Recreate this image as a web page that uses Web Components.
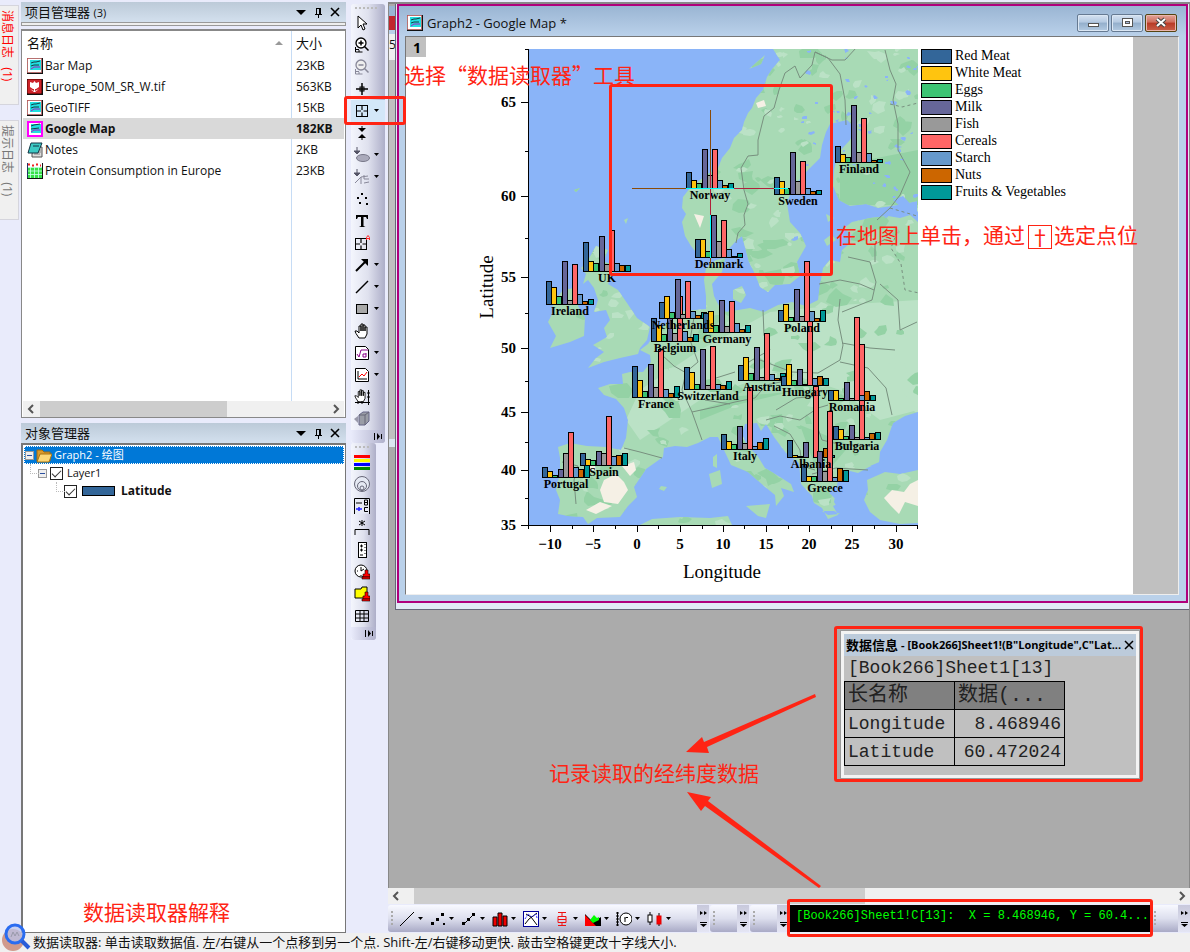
<!DOCTYPE html>
<html lang="zh-CN">
<head>
<meta charset="utf-8">
<title>Graph2 - Google Map</title>
<style>
html,body{margin:0;height:100%;overflow:hidden}
body{font-family:"Open Sans","Noto Sans CJK SC",sans-serif;font-size:13px;color:#111;background:#e9ebfb}
</style>
</head>
<body>
<app-shell></app-shell>
<script>
const base = `*{box-sizing:border-box}button{font:inherit;color:inherit;border:0;background:none;padding:0;margin:0;display:block}svg{display:block}`;
function define(tag, css, html) {
  const t = document.createElement('template');
  customElements.define(tag, class extends HTMLElement {
    constructor() {
      super();
      t.innerHTML = `<style>${base}${css}</style>${typeof html === 'function' ? html(this) : html}`;
      this.attachShadow({mode: 'open'}).append(t.content.cloneNode(true));
    }
  });
}

/* ---------- icons, all on a 16 x 16 grid ---------- */
const stamp = '<path d="M11 6h3v4h2v3H9v-3h2z" fill="#f00" stroke="#000" stroke-width=".6"/><path d="M8 13h8v2H8z" fill="#f00" stroke="#000" stroke-width=".6"/>';
const hand = '<path d="M5 15 2 10.500 1 8l2 0 2 2V3h2v5V1h2v7V2h2v6V4h2v7l-2 4z" fill="#fff" stroke="#000"/>';
const target = '<rect x="2.500" y="2.500" width="11" height="11" fill="none" stroke="#000"/><path d="M8 3v4M8 9.500V13M3 8h4M9.500 8H13" stroke="#000" stroke-width="1.200"/>';
const icons = {
  graph: '<rect width="16" height="16" fill="#111"/><rect x=".5" y=".5" width="14" height="14" fill="#fff" stroke="#c66" stroke-dasharray="2 1"/><rect x="3" y="2" width="11" height="10" fill="#20dfe0"/><path d="M4 5l3-1 2 0 4-1M4 8l3-1 5 0" stroke="#163c46" fill="none"/><path d="M4 11l3-2 6 0" stroke="#a020c0" fill="none"/>',
  graphOn: '<rect x="1" y="1" width="14" height="14" fill="#fff" stroke="#f0f" stroke-width="2"/><rect x="4" y="3" width="10" height="9" fill="#20dfe0"/><path d="M4 5l3-1 6-1M4 8l8-1" stroke="#163c46" fill="none"/><path d="M4 11l3-2 6 0" stroke="#a020c0" fill="none"/>',
  tulip: '<rect width="16" height="16" fill="#111"/><rect x=".5" y=".5" width="14" height="14" rx="1" fill="#cc2229" stroke="#811"/><path d="M3 3l3 1 1.500-2L9 4l3-1v5L9 10H6L3 8z" fill="#fff"/><path d="M7 9h1v4H7zM3 10l4 2v1zM12 10l-4 2v1z" fill="#fff"/>',
  notes: '<path d="M7 5h8v10H5v-3z" fill="#ddd" stroke="#555"/><path d="M8 8h6M8 10h6M7 12h6" stroke="#888"/><path d="M4 1h11l-4 10H1z" fill="#3cc9c4" stroke="#134"/><path d="M6 4h6" stroke="#134"/>',
  sheet: '<rect width="16" height="16" fill="#111"/><rect width="15" height="15" fill="#fff"/><path d="M1 1.500h2M5 2.500h2M9 1.500h2M13 2.500h1" stroke="#e22" stroke-width="2"/><path d="M0 4h15v11H0z" fill="#36e046"/><path d="M0 4.500h15M0 8h15M0 11.500h15M3.500 4v11M7.500 4v11M11.500 4v11" stroke="#cfe" stroke-width=".8"/><path d="M.5 0v15" stroke="#236"/>',
  folder: '<path d="M1 3h5l2 2h6v9H1z" fill="#d99a2b" stroke="#a06a10"/><path d="M4 7h12l-3 8H1z" fill="#fbd777" stroke="#a87212"/>',
  pointer: '<path d="M4 1v12l3-3 2 5 2-1-2-5h4z" fill="#fff" stroke="#000"/>',
  zoomIn: '<circle cx="7" cy="6" r="5" fill="#fff" stroke="#000" stroke-width="1.300"/><path d="M4.500 6h5M7 3.500v5M10.500 9.500l4 4" stroke="#000" stroke-width="1.500"/><path d="M1.500 10v5h7M2 12.500h3M5 15v-2" stroke="#000" fill="none"/>',
  zoomOut: '<circle cx="7" cy="6" r="5" fill="#eee" stroke="#889" stroke-width="1.300"/><path d="M4.500 6h5M10.500 9.500l4 4" stroke="#889" stroke-width="1.500"/><path d="M1.500 10v5h7M2 12.500h3M5 15v-2" stroke="#889" fill="none"/>',
  cross: '<path d="M8 2v12M2 8h12" stroke="#000" stroke-width="1.500"/><rect x="6" y="6" width="4" height="4" fill="none" stroke="#000"/>',
  target,
  squeeze: '<path d="M8 1v5M8 10v5" stroke="#000"/><path d="M4 3h8L8 7zM4 13h8L8 9z"/>',
  maskRegion: '<ellipse cx="9" cy="11" rx="6.500" ry="3.500" fill="#aab" stroke="#778"/><path d="M3 0v6M0 4h6L3 7z" stroke="#556" fill="#556"/>',
  maskCurve: '<path d="M3 0v6M0 4h6L3 7z" stroke="#556" fill="#556"/><path d="M1 14l6-6 7-1M7 8v7M10 6v4h5M10 14l5-1" stroke="#889" fill="none"/>',
  dots: '<path d="M7 2h2v2H7zM3 6h2v2H3zM11 6h2v2h-2zM5 11h2v2H5zM12 12h2v2h-2z"/>',
  text: '<path d="M2 2h12v4h-1l-1-2H9.500v9l2 1H5l2-1V4H4L3 6H2z"/>',
  targetA: '<g transform="translate(-1 1)">' + target + '</g><path d="M12.500 5V2.500L14 .5l1.500 2V5M12.500 3.500h3" stroke="#f22" fill="none"/>',
  arrow: '<path d="M2 14L12 4" stroke="#000" stroke-width="2"/><path d="M7 2h7v7z"/>',
  line: '<path d="M2 14L14 2" stroke="#000" stroke-width="1.500"/>',
  rect: '<rect x="2.500" y="3.500" width="11" height="9" fill="#a8a8a8" stroke="#000"/>',
  hand,
  formula: '<path d="M1.500 1.500h10l3 3v10h-13z" fill="#fff" stroke="#000"/><path d="M3 9l2 3 2-7h7" stroke="#808" fill="none"/><path d="M12 8v4H9V9h3" stroke="#808" fill="none"/>',
  plot: '<path d="M1.500 1.500h10l3 3v10h-13z" fill="#fff" stroke="#000"/><path d="M4 4v8h9" stroke="#000" fill="none"/><path d="M5 10l3-3 2 2 3-4" stroke="#f00" fill="none"/>',
  handAxis: '<g transform="scale(.85)">' + hand + '</g><path d="M1 13.500h15M14.500 1v15M13 4h3M13 8h3M4 12v3M8 12v3" stroke="#000"/>',
  cube: '<path d="M5 4l4-3h6v9l-4 4H5z" fill="#9a9da6" stroke="#668"/><path d="M5 4h6l4-3M11 4v10" stroke="#667" fill="none"/><path d="M0 8l4-3v7z" fill="#99a"/>',
  bands: '<path d="M0 1h16v3H0z" fill="#f00"/><path d="M0 5h16v3H0z" fill="#ff0"/><path d="M0 9h16v3H0z" fill="#00f"/><path d="M0 13h16v3H0z" fill="#080"/>',
  rings: '<g fill="none" stroke="#667"><circle cx="8" cy="8" r="7.500" fill="#e5e9f3"/><circle cx="8" cy="10" r="4.500"/><circle cx="8" cy="12" r="2"/></g>',
  legendBC: '<rect x=".5" y=".5" width="15" height="15" fill="#e8ebf5"/><path d="M.5 16V.5h15V16M2 5h6" stroke="#000" fill="none"/><path d="M2 11h6M5 9v4" stroke="#22f" stroke-width="1.500"/><path d="M10.500 2v5h3V2h-3M10.500 4.500h3M14 9.500h-3.500v4H14" stroke="#000" fill="none"/>',
  bracket: '<path d="M1 15V9.500h14V15M8 0v6M5 1l6 4M11 1L5 5" stroke="#000" fill="none"/>',
  scale: '<rect x="4.500" y=".5" width="8" height="15" fill="#fff" stroke="#000"/><path d="M6 4h3M7.500 2.500v3M6 8h3M7.500 6.500v3M6 13h3M11 2v1M11 5v1M11 8v1M11 11v1" stroke="#000"/>',
  clock: '<circle cx="7" cy="7" r="6" fill="#fff" stroke="#000"/><path d="M7 3v4l3-2M3 7h1M7 11v1" stroke="#000" fill="none"/>' + stamp,
  stampFolder: '<path d="M1 3h6l1-2h5v11H1z" fill="#ff0" stroke="#000"/>' + stamp,
  grid: '<path d="M1.500 2.500h13v11h-13zM1 6h13M1 10h13M6 2v11M10 2v11" stroke="#000" fill="none"/>',
  thinLine: '<path d="M1 15L15 1" stroke="#000"/>',
  scatter: '<path d="M1 11h3v3H1zM6 7h3v3H6zM11 2h3v3h-3zM13 12h2v2h-2z"/>',
  lineDots: '<path d="M2 14L14 2" stroke="#000"/><path d="M1 11h3v3H1zM6 7h3v3H6zM11 2h3v3h-3z"/>',
  columns: '<path d="M1 6h4v9H1zM6 2h4v13H6zM11 5h4v10h-4z" fill="#e00" stroke="#000"/>',
  multi: '<rect x=".5" y=".5" width="15" height="15" fill="#fff" stroke="#009"/><path d="M2 13l4-5 8-6M3 3l5 3 6 8" stroke="#000" fill="none"/><path d="M2 8l3-5 4 3 4-3 1 4" stroke="#33f" fill="none" stroke-dasharray="2 1"/>',
  box: '<path d="M8 1v4M4 1.500h8M4 5.500h8v6H4zM4 8.500h8M8 11v4M4 14.500h8" stroke="#e11" fill="none"/>',
  area: '<path d="M0 3l8 8 8-5v9H0z" fill="#000"/><path d="M0 4l11 11H0z" fill="#f00"/><path d="M5 9l4-5 3 3 2-1v3l-6 3z" fill="#0f0"/>',
  polar: '<path d="M1.500 1v14M0 2h3M0 5h3M0 8h3M0 11h3M0 14h3" stroke="#000"/><circle cx="10" cy="8" r="6" fill="#fff" stroke="#000"/><path d="M9 11V6M9 7.500l1-1h2" stroke="#000" fill="none"/>',
  candle: '<path d="M3 1v13M12 2v13" stroke="#000"/><rect x="1" y="4" width="4" height="7" fill="#fff" stroke="#000"/><rect x="10" y="5" width="4" height="8" fill="#f00" stroke="#d00"/>'
};
const icon = n => `<svg width="16" height="16" viewBox="0 0 16 16" aria-hidden="true">${icons[n]}</svg>`;

/* ---------- vertical log tab ---------- */
define('log-tab', `
:host{display:block;height:100px;background:#f0f0f0;border:1px solid #d5d5dd;border-left:0;width:19px;padding:4px 0 0 0;color:#777;font-size:12px}
:host([alert]){color:#f00}
span{writing-mode:vertical-rl;text-orientation:sideways;line-height:15px;white-space:pre}`,
`<span><slot></slot></span>`);

/* ---------- docked panel with its caption ---------- */
define('dock-panel', `
:host{display:flex;flex-direction:column;min-height:0}
header{display:flex;align-items:center;height:20px;padding:0 2px 0 4px;background:linear-gradient(#bccad8,#d3e0ee);flex:none;line-height:20px}
h2{font-size:13px;font-weight:400;margin:0;flex:1}small{font-size:11px}
button{width:17px;height:16px}`,
el => `<header><h2>${el.getAttribute('caption')} <small>${el.getAttribute('count') || ''}</small></h2>
<button aria-label="菜单"><svg width="17" height="16"><path d="M3 6h10L8 11z"/></svg></button>
<button aria-label="固定"><svg width="17" height="16"><path d="M6.500 4v6M10.500 4v6M6 4.500h5M5 10.500h7M8.500 11v3M9.500 4v6" stroke="#000" fill="none"/></svg></button>
<button aria-label="关闭"><svg width="17" height="16"><path d="M4 4l8 8M12 4l-8 8" stroke="#000" stroke-width="1.600"/></svg></button></header><slot></slot>`);

/* ---------- horizontal scroll bar ---------- */
define('h-scroll', `
:host{display:flex;height:16px;background:#f0f0f0;flex:none;align-items:center}
button{width:17px;height:16px}
.track{flex:1;height:100%;display:flex;padding:0 8px 0 var(--lead,0)}.thumb{background:#cdcdcd;width:var(--thumb,60%)}`,
`<button aria-label="左"><svg width="17" height="16"><path d="M10 4L6 8l4 4" stroke="#555" stroke-width="2" fill="none"/></svg></button>
<div class="track"><div class="thumb"></div></div>
<button aria-label="右"><svg width="17" height="16"><path d="M7 4l4 4-4 4" stroke="#555" stroke-width="2" fill="none"/></svg></button>`);

/* ---------- project file list ---------- */
const files = [['graph','Bar Map','23KB'],['tulip','Europe_50M_SR_W.tif','563KB'],['graph','GeoTIFF','15KB'],['graphOn','Google Map','182KB'],['notes','Notes','2KB'],['sheet','Protein Consumption in Europe','23KB']];
define('file-list', `
:host{display:flex;flex-direction:column;background:#fff;border:1px solid #888;border-width:2px 1px 1px 1px;flex:1;min-height:0;padding:0 1px}
.body{flex:1;background:linear-gradient(90deg,transparent calc(100% - 53px),#c6dcf5 calc(100% - 53px),#c6dcf5 calc(100% - 52px),transparent calc(100% - 52px));min-height:0}
table{border-collapse:collapse;width:100%;table-layout:fixed;font-size:12px;line-height:20px}
th{font-weight:400;font-size:13px;text-align:left;height:24px;padding:0 4px}
th:first-child{position:relative}th svg{position:absolute;right:8px;top:10px}
th:last-child,td:last-child{width:53px;padding:0 0 0 5px}
td{height:21px;padding:0 0 0 4px;overflow:visible;white-space:nowrap}
td div{display:flex;gap:2px;align-items:center}
.on td{background:#d9d9d9;font-weight:700}`,
`<div class="body"><table><thead><tr><th>名称<svg width="8" height="5"><path d="M4 0l4 4H0z" fill="#999"/></svg></th><th>大小</th></tr></thead><tbody>
${files.map(f => `<tr${f[0] === 'graphOn' ? ' class="on"' : ''}><td><div>${icon(f[0])}<span>${f[1]}</span></div></td><td>${f[2]}</td></tr>`).join('')}
</tbody></table></div><h-scroll style="--thumb:67%"></h-scroll>`);

/* ---------- object tree ---------- */
define('object-tree', `
:host{display:block;background:#fff;border:2px solid #777;border-right-width:1px;border-bottom-width:1px;flex:1;font-size:11px;line-height:18px;padding:1px}
.row{display:flex;align-items:center;height:18px;gap:3px;padding-left:1px}
.root{background:#0078d7;color:#fff;outline:1px dotted #fff;outline-offset:-1px;gap:2px}
.l1{padding-left:14px}.l2{padding-left:40px}
.l1::before,.l2::before{content:"";position:absolute;width:8px;height:9px;margin:-9px 0 0 -8px;border:1px dotted #bbb;border-width:0 0 1px 1px}
.box{width:9px;height:9px;border:1px solid #999;background:linear-gradient(#2c50a0,#2c50a0) center/5px 1px no-repeat #eee}
input{appearance:none;width:13px;height:13px;margin:0 1px 0 0;border:1px solid #222;background:#fff;display:grid;place-items:center}
input:checked::before{content:"";width:8px;height:4px;border:solid #333;border-width:0 0 1px 1px;transform:rotate(-45deg);margin-bottom:2px}
.swatch{width:33px;height:10px;background:#336699;border:1px solid #000;margin:0 3px 0 1px}
label{display:flex;align-items:center;gap:3px}b{font-size:12px}`,
`<div class="row root"><i class="box"></i>${icon('folder')}<span>Graph2 - 绘图</span></div>
<div class="row l1"><i class="box"></i><label><input type="checkbox" checked>Layer1</label></div>
<div class="row l2"><label><input type="checkbox" checked><i class="swatch"></i><b>Latitude</b></label></div>`);

/* ---------- vertical tool strip ---------- */
const caret = '<svg class="caret" width="6" height="4"><path d="M0 0h5L2.500 3z"/></svg>';
define('tool-strip', `
:host{display:flex;flex-direction:column;border-radius:3px;background:linear-gradient(90deg,#f4f6fd,#dfe1ee 50%,#adaec8);width:var(--w,34px)}
.grip{height:8px;padding:3px 0 0 4px}.grip i{display:block;width:24px;height:2px;background:repeating-linear-gradient(90deg,#bbb 0 2px,transparent 2px 4px)}
:host([short]) .grip i{width:16px}
button{display:flex;align-items:center;height:22px;width:100%;padding-left:3px}
button.on{background:#d3e7f8}
.caret{margin-left:4px}
.more{height:13px;background:linear-gradient(90deg,#e9ebfb,#b0b1cc);border-radius:0 0 4px 4px;display:flex;justify-content:flex-end;padding:3px 3px 0 0}`,
el => `<div class="grip"><i></i></div>${el.getAttribute('tools').split(' ').map(n => {
  const drop = n.endsWith('+'), k = n.replace('+', '');
  return `<button aria-label="${k}"${k === 'target' ? ' class="on"' : ''}>${icon(k)}${drop ? caret : ''}</button>`;
}).join('')}<div class="more"><svg width="8" height="8"><path d="M.5 0v7" stroke="#000"/><path d="M3 0l3 3.500L3 7z"/><path d="M7.500 1v5" stroke="#000"/></svg></div>`);

/* ---------- horizontal tool bar ---------- */
define('tool-row', `
:host{display:flex;height:27px;border-radius:3px;background:linear-gradient(#f8f9ff,#dddfee 50%,#a9aac6);align-items:center;flex:none}
.grip{width:2px;height:15px;margin:0 6px 0 3px;background:repeating-linear-gradient(#aaa 0 2px,transparent 2px 4px);flex:none}
button{display:flex;align-items:center;gap:3px;width:31px;height:24px;flex:none}
.more{margin-left:auto;width:12px;height:100%;background:linear-gradient(#c8c9dc,#e4e5f4);padding:5px 2px 0 3px}`,
el => `<span class="grip"></span>${(el.getAttribute('tools') || '').split(' ').filter(Boolean).map(n => `<button aria-label="${n}">${icon(n)}${caret}</button>`).join('')}
<div class="more"><svg width="7" height="18"><path d="M0 1l3 2-3 2zM4 1l3 2-3 2zM0 14h7l-3.500 3zM0 12h7v1H0z"/></svg></div>`);

/* ---------- the map graph ---------- */
const colours = ['#336699','#ffc40f','#3cc473','#666699','#999999','#ff6666','#6699cc','#cc6600','#009999'];
const foods = ['Red Meat','White Meat','Eggs','Milk','Fish','Cereals','Starch','Nuts','Fruits &amp; Vegetables'];
const countries = [
 ['Portugal',542,477,[10,6,2,8,24,45,10,8,12]],['Spain',580,465,[12,6,5,14,12,49,9,10,12]],
 ['Finland',835,162,[16,8,5,57,10,44,9,2,3]],['Sweden',774,194,[17,13,6,42,13,33,6,3,4]],
 ['Norway',686,188,[16,8,5,39,13,39,8,3,5]],['Denmark',695,257,[18,18,6,42,16,37,8,1,4]],
 ['UK',583,271,[29,10,8,35,7,41,8,6,6]],['Ireland',546,304,[23,17,8,43,4,40,10,3,5]],
 ['Belgium',651,341,[23,16,7,28,8,45,10,4,7]],['Netherlands',659,318,[16,22,6,39,4,37,7,3,6]],
 ['Germany',703,332,[19,21,7,32,6,31,9,3,7]],['Albania',787,457,[17,2,1,15,0,71,1,9,2]],
 ['Greece',801,481,[17,5,5,30,10,70,4,13,11]],
 ['France',632,397,[31,17,6,33,10,48,8,4,11]],['Switzerland',684,389,[22,17,5,40,4,43,5,4,8]],
 ['Italy',721,449,[15,8,5,23,6,62,3,7,11]],
 ['Austria',738,380,[15,23,7,33,3,47,6,2,7]],['Hungary',781,385,[9,21,5,16,1,67,7,9,7]],
 ['Poland',778,321,[11,17,4,32,5,60,10,3,11]],['Bulgaria',833,439,[13,10,3,14,2,95,2,6,7]],
 ['Romania',828,400,[10,10,2,18,2,83,5,9,5]]];
const land = `
M773 49L780 60 773 68 767 77 763 90 756 98 752 108 748 113 744 122 742 130 734 138 730 148 722 158 718 168 708 174 700 180 690 188 683 197 682 208 686 214 682 222 685 236 691 246 699 256 716 258 728 250 735 242 742 236 745 247 749 262 755 274 760 287 768 292 775 285 790 284 800 276 797 262 806 246 800 233 790 222 787 203 793 187 806 172 820 158 822 145 826 132 830 124 847 120 856 128 850 140 838 153 834 170 833 186 839 200 850 206 866 204 878 208 892 206 908 203 917 201 917 213 900 218 888 216 870 218 852 222 844 228 852 236 848 245 842 250 840 262 830 260 823 268 820 285 818 300 806 306 792 302 778 305 764 312 750 308 738 310 726 312 719 306 714 296 712 284 722 272 725 258 716 260 706 268 704 280 706 296 706 309 695 310 684 311 672 315 665 325 656 332 648 344 640 350 650 355 651 362 643 372 630 372 622 374 623 384 610 384 598 388 604 395 616 399 624 408 628 420 626 438 621 450 606 447 587 446 570 443 558 447 560 458 560 473 556 490 560 500 558 514 568 516 583 517 588 524 597 518 620 517 628 506 637 497 634 487 646 469 663 457 664 448 675 446 687 447 698 443 710 437 718 437 724 450 731 465 748 472 764 486 775 495 776 506 784 496 781 488 794 492 791 484 780 477 765 468 757 455 747 446 742 434 745 424 757 423 761 431 766 424 774 437 786 453 799 463 801 484 812 496 814 503 822 508 828 519 838 515 833 506 840 503 829 493 834 486 846 488 841 478 846 470 858 473 869 467 879 464 880 452 887 440 893 423 905 416 918 412 918 49z
M867 480L885 472 900 474 918 470 918 523 900 524 880 520 870 512 864 500 868 490z
M587 262L596 246 608 250 603 262 612 264 614 272 608 284 618 290 627 303 637 318 650 327 647 340 640 348 638 354 620 358 604 362 588 368 596 358 604 352 593 345 607 337 604 328 610 320 606 310 594 312 598 300 594 288 588 280 583 284 586 274 581 268z
M563 290L574 288 580 296 578 306 585 318 584 336 570 342 550 348 556 336 548 322 554 310 552 304z
M746 506L770 504 766 518 758 516z M709 474L720 470 722 484 712 488z M713 457L717 454 717 468 713 466z
M640 525L652 519 680 517 710 518 728 516 732 525z M661 486l6 1-3 4-5-2z M574 190l6-2-4 4z M624 220l4-2-2 6z
M733 290l9-4 4 9-5 8-8-4z M822 511h12l6 3-12 1z M749 69l16-14-4 9z M826 214l8 4-6 4z M824 240l8-6 4 6-9 6z`;
const borders = `
M785 73L779 90 774 108 764 116 758 140 758 155 748 156 741 168 744 190 748 204 744 215 745 225 738 233 736 243
M785 73L795 66 800 78 812 65 815 52 828 58 840 74 845 100 846 125M815 52L832 60 845 60 856 48M885 50L890 70 896 84 893 100 898 124 898 150 910 172 900 195 890 208 877 220
M848 257L870 262 876 282 872 300 842 312M819 284L840 280 860 284 874 290M840 299L838 320 843 345 840 360 818 373 792 372 760 360M763 310L764 335 770 350 752 360 740 368M875 262V244L884 240M880 284L898 300 900 330 917 322M842 343L870 348 895 350M840 362L868 368 886 388 892 415
M695 312L690 340 698 362 686 372 682 390 692 412 702 440M662 355L674 366 688 374M624 448L640 452 662 458M562 462L578 466 574 480 576 504M692 412L715 407 735 402 755 398M755 398L766 385 790 380M766 420L780 416 800 420 818 408 828 405M774 426L790 434 800 450 802 466 815 470M815 420L822 440 838 444 870 446M812 474L836 468 868 470M705 400L730 404M735 372L716 378M776 410L796 398 818 396`;
function rng(seed) { return () => (seed = (seed * 16807) % 2147483647) / 2147483647; }
function patches() {
  const r = rng(4711), n = v => Math.round(v);
  let dark = '', pale = '', water = '';
  const blob = (x, y, s) => {
    let d = '';
    const k = 7;
    for (let i = 0; i < k; i++) {
      const a = i / k * 6.283, q = s * (0.4 + r());
      d += (i ? 'L' : 'M') + n(x + Math.cos(a) * q * 1.1) + ' ' + n(y + Math.sin(a) * q * 0.8);
    }
    return d + 'z';
  };
  for (let i = 0; i < 230; i++) dark += blob(540 + r() * 378, 49 + r() * 476, 3 + r() * 7);
  for (let i = 0; i < 260; i++) pale += blob(540 + r() * 378, 49 + r() * 476, 2 + r() * 5);
  for (let i = 0; i < 60; i++) water += blob(790 + r() * 128, 49 + r() * 190, 1 + r() * 2);
  return `<path d="${dark}" fill="#94d2a5"/><path d="${pale}" fill="#bbe2c6"/><path d="${water}" fill="#8ab4f8"/>`;
}
function bars([name, x, y, h]) {
  return h.map((v, i) => `<rect x="${x + Math.round(i * 5.2) + .5}" y="${y - v + .5}" width="5" height="${v}" fill="${colours[i]}"/>`).join('');
}
const yt = [[65,102],[60,196],[55,277],[50,348],[45,412],[40,470],[35,525]];
const xt = [['−10',550],['−5',593],['0',637],['5',680],['10',723],['15',766],['20',809],['25',852],['30',896]];
define('map-graph', `:host{display:block;flex:none;background:#fff}svg{font-family:"Liberation Serif",serif}`,
`<svg width="727" height="557" viewBox="406 37 727 557" role="img" aria-label="Google Map">
<defs><clipPath id="frame"><rect x="528" y="49" width="390" height="476"/></clipPath><clipPath id="land"><path d="${land}"/></clipPath></defs>
<rect x="528" y="49" width="390" height="476" fill="#8ab4f8"/>
<g clip-path="url(#frame)"><path d="${land}" fill="#a8dab5"/>
<g clip-path="url(#land)">
<path d="M770 312L840 305 918 300V410L880 420 840 390 780 370 700 400 640 440 626 420 640 390 700 350z" fill="#bbe2c6"/>
<path d="M700 410L740 396 790 392 740 404 700 420zM840 165L918 150V205L840 205zM800 425L850 445 820 480z" fill="#94d2a5"/>
${patches()}
<path d="M604 480l12-6 8 8 4 8-10 14-14-2-4-12zM622 466l12-4 2 8-6 6zM586 510l14-8 12 4-16 8zM584 466l10-4 2 8-10 2zM884 498l8-8 12 2 6-8 8-4v26l-13-4-6 12-8-8zM694 214l10 2-4 12zM756 103l8-3 2 6-8 2z" fill="#f5f0e5"/></g>
<path d="M870 466l14-6 16 8-14 4zM838 480l18 2 8 30-18 10-12-20zM893 200l10-4 15 16v10z" fill="#8ab4f8"/>
<path d="${borders}" fill="none" stroke="#78907f"/>
<path d="M890 104l12 3 16-4M890 208l27 8M897 232l-6 16 10 16 4 26 14 3" fill="none" stroke="#78907f" stroke-dasharray="3 3"/></g>
<g stroke="#000" shape-rendering="crispEdges">
<path fill="none" d="M528.500 49V525.500H918${yt.map(t => `M521 ${t[1]}.5h7`).join('')}${[49,151,238,313,381,442,498].map(v => `M525 ${v}.5h3`).join('')}${xt.map(t => `M${t[1]}.5 525v7`).join('')}${[528,572,615,658,702,744,788,831,874,917].map(v => `M${v}.5 525v4`).join('')}"/>
${countries.map(bars).join('')}</g>
<g font-size="12" font-weight="700" text-anchor="middle">${countries.map(c => `<text x="${c[1] + 24}" y="${c[2] + 11}">${c[0]}</text>`).join('')}</g>
<g fill="#8a4b08"><rect x="710" y="110" width="1" height="62"/><rect x="632" y="188" width="54" height="1"/><rect x="710" y="258" width="1" height="6"/></g>
<g fill="#b0203a"><rect x="710" y="172" width="1" height="43"/><rect x="734" y="188" width="40" height="1"/></g>
<g fill="#00ffff"><rect x="686" y="188" width="48" height="1"/><rect x="710" y="215" width="1" height="43"/><rect x="774" y="188" width="14" height="1"/></g>
<g font-size="15" font-weight="700">${yt.map(t => `<text x="516" y="${t[1] + 5}" text-anchor="end">${t[0]}</text>`).join('')}${xt.map(t => `<text x="${t[1]}" y="549" text-anchor="middle">${t[0]}</text>`).join('')}</g>
<g font-size="19" text-anchor="middle"><text x="722" y="578">Longitude</text><text transform="translate(493 287) rotate(-90)">Latitude</text></g>
<g font-size="14">${foods.map((f, i) => `<rect x="921.500" y="${49.5 + i * 17}" width="30" height="14" fill="${colours[i]}" stroke="#000" shape-rendering="crispEdges"/><text x="955" y="${60 + i * 17}">${f}</text>`).join('')}</g>
<rect x="406" y="37" width="20" height="20" fill="#c0c0c0"/><text x="417" y="53" font-size="14" font-weight="700" text-anchor="middle" style="font-family:'Open Sans'">1</text>
</svg>`);

/* ---------- child windows ---------- */
define('graph-window', `
:host{display:block;border:1px solid #667;border-right:0;background:#e3ebf5;padding:0 1px 6px 1px}
.frame{border:2px solid #b0007c;background:#bad1ea;padding:0 7px 6px 6px}
header{display:flex;align-items:center;height:30px;margin:0 -7px 0 -6px;padding:3px 9px 0 8px;background:linear-gradient(#9ab5d3,#bad1ea);gap:4px}
h1{font-size:13px;font-weight:400;margin:0;flex:1}
.btns{display:flex;gap:2px;align-self:flex-start;margin-top:5px}
button{width:32px;height:18px;border:1px solid #667a92;border-radius:2px;background:linear-gradient(#d5e2f1,#b4c9e1 45%,#93aecb 50%,#b3cae2);box-shadow:inset 0 0 0 1px #dbe7f4}
.x{background:linear-gradient(#e3a499,#cf6d5c 45%,#b83a26 50%,#c9604a);border-color:#541;box-shadow:inset 0 0 0 1px #eab7ae}
button svg{margin:auto}
.client{display:flex;background:#c0c0c0;border:1px solid #777;border-color:#777 #eee #eee #777;overflow:hidden}`,
`<div class="frame"><header>${icon('graph')}<h1>Graph2 - Google Map *</h1><div class="btns">
<button aria-label="最小化"><svg width="14" height="12"><rect x="2.500" y="6.500" width="10" height="3" fill="#fff" stroke="#555"/></svg></button>
<button aria-label="最大化"><svg width="14" height="12"><rect x="2.500" y="1.500" width="10" height="8" fill="#fff" stroke="#555"/><rect x="5.500" y="4.500" width="4" height="2" fill="#abd" stroke="#555"/></svg></button>
<button class="x" aria-label="关闭"><svg width="14" height="12"><path d="M3 2l8 7M11 2L3 9" stroke="#444" stroke-width="4"/><path d="M3 2l8 7M11 2L3 9" stroke="#fff" stroke-width="2"/></svg></button></div></header>
<div class="client"><map-graph></map-graph></div></div>`);

define('data-info', `
:host{display:block;background:#c0c0c0;border:3px solid #f3f3f3;outline:1px solid #999;font-family:"Liberation Mono","Noto Sans CJK SC",monospace;height:147px}
header{display:flex;align-items:center;height:22px;background:#bccbdb;padding:0 2px;font:700 11px/22px "Open Sans","Noto Sans CJK SC",sans-serif;gap:3px;color:#000}
h2{margin:0;font-size:13px;line-height:22px;white-space:nowrap;flex:none}.t{flex:1;white-space:nowrap}
p{margin:0;font-size:18px;line-height:25px;padding-left:4px;color:#222}
table{border-collapse:collapse;font-size:18px;color:#222}
td,th{border:1px solid #000;width:110px;height:28px;padding:0 3px;line-height:24px;font-weight:400;text-align:left;white-space:nowrap}
thead th{background:#808080;font-size:20px}td{text-align:right}`,
`<header><h2>数据信息</h2><span class="t">- [Book266]Sheet1!(B"Longitude",C"Lat...</span><button aria-label="关闭"><svg width="10" height="10"><path d="M1 1l8 8M9 1L1 9" stroke="#000" stroke-width="1.500"/></svg></button></header>
<p>[Book266]Sheet1[13]</p>
<table><thead><tr><th>长名称</th><th>数据(...</th></tr></thead><tbody><tr><th>Longitude</th><td>8.468946</td></tr><tr><th>Latitude</th><td>60.472024</td></tr></tbody></table>`);

/* ---------- red call-outs drawn over the page ---------- */
define('call-outs', `
:host{display:block;position:absolute;inset:0;pointer-events:none;color:#ff2414;font-family:"Noto Sans CJK SC",sans-serif;font-size:21px;line-height:28px;overflow:hidden}
.box{position:absolute;border:3px solid #ff2414;border-radius:3px}
.note{position:absolute;white-space:nowrap}
.key{display:inline-block;width:24px;height:24px;line-height:20px;border:1px solid #ff2414;text-align:center;vertical-align:-2px;margin:0 2px 0 3px}
svg{position:absolute;left:680px;top:690px}`,
`<div class="box" style="left:344px;top:96px;width:62px;height:29px"></div>
<div class="box" style="left:609px;top:84px;width:224px;height:192px"></div>
<div class="box" style="left:834px;top:626px;width:309px;height:156px"></div>
<div class="box" style="left:787px;bottom:15px;width:366px;height:38px"></div>
<div class="note" style="left:404px;top:60px">选择“数据读取器”工具</div>
<div class="note" style="left:836px;top:220px">在地图上单击，通过<span class="key">†</span>选定点位</div>
<div class="note" style="left:549px;top:758px">记录读取的经纬度数据</div>
<div class="note" style="left:83px;bottom:27px">数据读取器解释</div>
<svg width="142" height="198" viewBox="680 690 142 198" fill="#ff2414"><path d="M686 752L702 737 704 742 815 694 816 697 707 747 709 753zM687 792L711 797 708 801 821 886 819 888 705 806 701 811z"/></svg>`);

/* ---------- page ---------- */
define('app-shell', `
:host{display:grid;position:relative;grid-template:minmax(0,1fr) 19px / 21px 325px 42px minmax(0,1fr);height:100vh}
.tabs{display:flex;flex-direction:column;gap:15px;padding-top:5px}
.side{display:flex;flex-direction:column;padding:2px 0 0 0;gap:5px;min-height:0}
.side dock-panel:first-child{height:416px;flex:none}.side dock-panel:last-child{flex:1}
.bar{height:4px;margin:0 0 3px;border:1px solid #999;background:#eee;flex:none}
.tools{padding:4px 0 0 5px;display:flex;flex-direction:column}
.work{display:flex;flex-direction:column;min-width:0;min-height:0}
.mdi{position:relative;flex:1;background:#ababab;border:2px solid #888;border-width:2px 1px 0 1px;margin-top:2px;overflow:hidden}
.behind{position:absolute;left:0;top:2px;width:8px;height:441px;background:#c0c0c0;border-bottom:8px solid #dce6f2;overflow:hidden;font-size:12px;line-height:14px}
.behind i{display:block;height:28px;background:linear-gradient(#9ab5d3 10px,#c1272d 10px,#c1272d 24px,#bad1ea 24px)}
.behind b{display:block;font-weight:400;background:#f0f0f0;height:26px;padding-top:4px;border-bottom:2px solid #eee}
graph-window{position:absolute;left:6px;top:-1px;right:0}
data-info{position:absolute;left:452px;top:627px;width:298px}
.dock{display:flex;height:29px;padding:1px 0 0;gap:1px;background:#e9ebfb}
.dock .a{width:321px}.dock .b{width:39px}.dock .c{flex:1;min-width:0}
output{width:360px;flex:none;background:#000;color:#0f0;font:12px/22px "Liberation Mono",monospace;padding-left:6px;white-space:pre;overflow:hidden;height:27px}
footer{grid-column:1/-1;background:#f0f0f0;display:flex;align-items:center;line-height:19px;font-size:13px;padding-left:33px;position:relative;white-space:nowrap}
footer svg{position:absolute;left:0;bottom:0}`,
`<div class="tabs"><log-tab alert>消息日志   (1)</log-tab><log-tab>提示日志   (1)</log-tab></div>
<div class="side"><dock-panel caption="项目管理器" count="(3)"><div class="bar"></div><file-list></file-list></dock-panel><dock-panel caption="对象管理器"><object-tree></object-tree></dock-panel></div>
<div class="tools">
<tool-strip tools="pointer zoomIn zoomOut cross target+ squeeze maskRegion+ maskCurve+ dots text targetA arrow+ line+ rect+ hand formula+ plot+ handAxis cube"></tool-strip>
<tool-strip short style="--w:25px" tools="bands rings legendBC bracket scale clock stampFolder grid"></tool-strip></div>
<div class="work"><div class="mdi"><div class="behind"><i></i><b>5</b></div><graph-window></graph-window><data-info></data-info></div>
<h-scroll style="--lead:9px;--thumb:60%"></h-scroll>
<div class="dock"><tool-row class="a" tools="thinLine scatter lineDots columns multi box area polar candle"></tool-row><tool-row class="b"></tool-row><tool-row class="b"></tool-row><output>[Book266]Sheet1!C[13]:  X = 8.468946, Y = 60.4...</output><tool-row class="c"></tool-row></div></div>
<footer><svg width="32" height="30" viewBox="0 0 32 30"><circle cx="13" cy="18" r="11" fill="#d09a8c"/><circle cx="15" cy="12" r="9" fill="#b8c4ee" fill-opacity=".7" stroke="#2a6cf0" stroke-width="3"/><path d="M11 15l2-5 2 4 2-4 2 4" stroke="#99a" fill="none"/><path d="M22 19l7 7" stroke="#2a5cd8" stroke-width="4"/></svg>数据读取器: 单击读取数据值. 左/右键从一个点移到另一个点. Shift-左/右键移动更快. 敲击空格键更改十字线大小.</footer>
<call-outs></call-outs>`);
</script>
</body>
</html>
